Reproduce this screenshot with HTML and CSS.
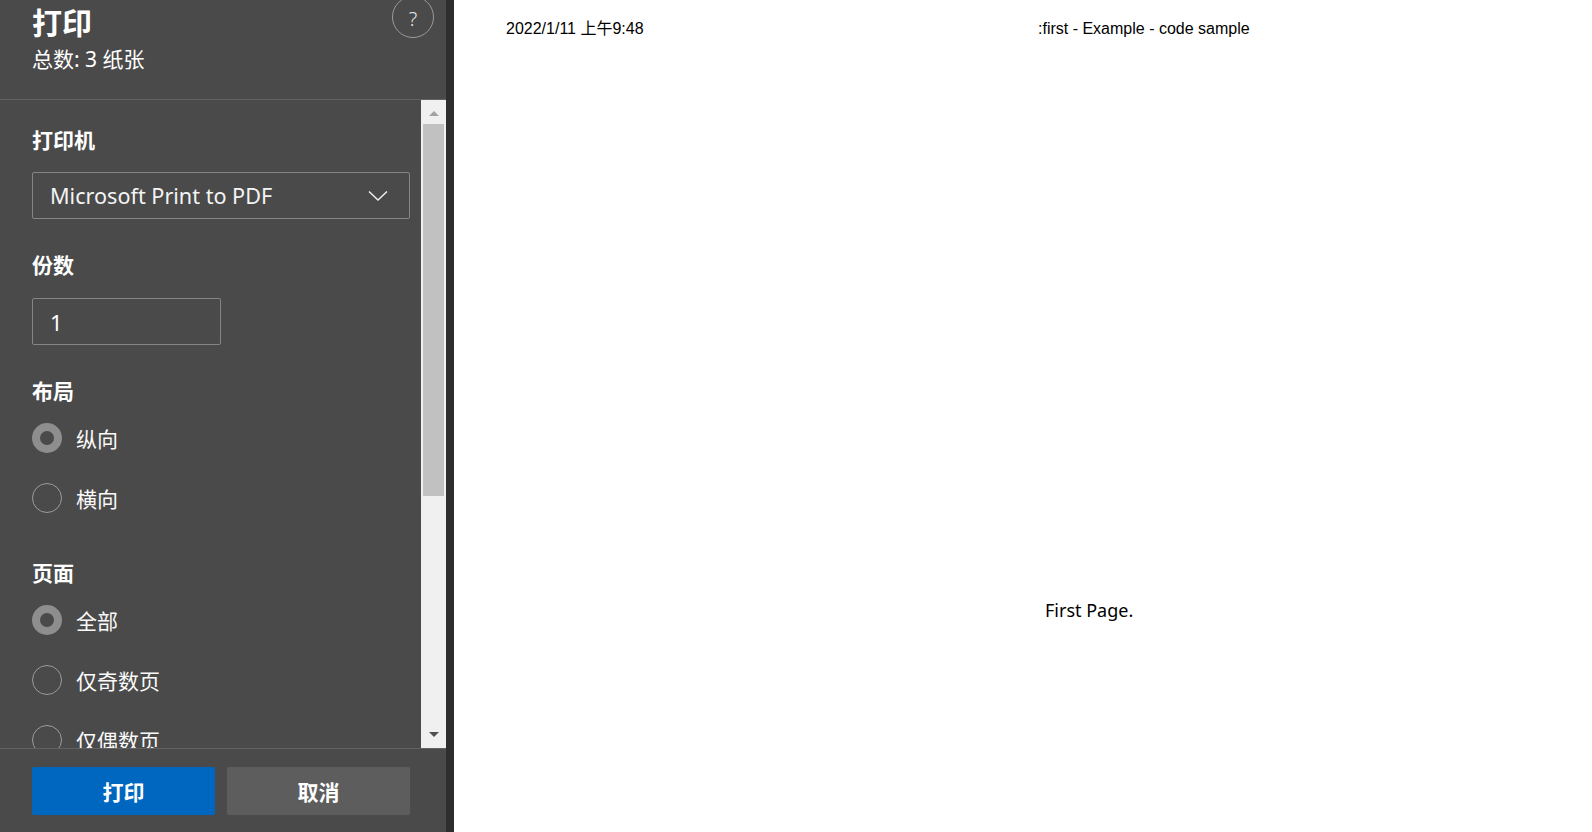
FILE: index.html
```html
<!DOCTYPE html>
<html lang="zh-CN">
<head>
<meta charset="utf-8">
<title>打印</title>
<link rel="stylesheet" href="styles.css">
</head>
<body>
<div class="app">
  <aside class="panel">
    <header class="panel-head">
      <h1 class="title">打印</h1>
      <div class="subtitle">总数: 3 纸张</div>
      <div class="help">?</div>
    </header>
    <div class="scroll-wrap">
      <div class="scroll-content">
        <div class="label">打印机</div>
        <div class="select">
          <span class="select-text">Microsoft Print to PDF</span>
          <svg class="chev" width="20" height="12" viewBox="0 0 20 12"><path d="M1 1.5 L10 10 L19 1.5" fill="none" stroke="#f2f2f2" stroke-width="1.4"/></svg>
        </div>
        <div class="label gap">份数</div>
        <div class="input">1</div>
        <div class="label gap">布局</div>
        <div class="radios">
          <div class="radio on"><span class="dot"></span><span class="rtext">纵向</span></div>
          <div class="radio"><span class="dot"></span><span class="rtext">横向</span></div>
        </div>
        <div class="label gap2">页面</div>
        <div class="radios">
          <div class="radio on"><span class="dot"></span><span class="rtext">全部</span></div>
          <div class="radio"><span class="dot"></span><span class="rtext">仅奇数页</span></div>
          <div class="radio"><span class="dot"></span><span class="rtext">仅偶数页</span></div>
        </div>
      </div>
      <div class="scrollbar">
        <div class="arrow up"></div>
        <div class="track"><div class="thumb"></div></div>
        <div class="arrow down"></div>
      </div>
    </div>
    <footer class="panel-foot">
      <button class="btn primary">打印</button>
      <button class="btn secondary">取消</button>
    </footer>
  </aside>
  <div class="divider"></div>
  <main class="preview">
    <div class="page-head">
      <span class="date">2022/1/11 上午9:48</span>
      <span class="doc-title">:first - Example - code sample</span>
    </div>
    <div class="page-body">First Page.</div>
  </main>
</div>
</body>
</html>
```
FILE: styles.css
```css
* { box-sizing: border-box; }
html, body { margin: 0; padding: 0; height: 100%; }
body {
  font-family: "Noto Sans", "Noto Sans CJK SC", sans-serif;
  overflow: hidden;
  background: #fff;
}
.app { display: flex; height: 832px; width: 1592px; }

.panel {
  width: 446px;
  flex: none;
  background: #4a4a4a;
  color: #fff;
  display: flex;
  flex-direction: column;
  position: relative;
}
.panel-head {
  height: 100px;
  flex: none;
  border-bottom: 1px solid #626262;
  padding: 0 0 0 32px;
  position: relative;
}
.title {
  margin: 0;
  font-family: "Noto Sans CJK SC", sans-serif;
  font-size: 30px;
  font-weight: 700;
  line-height: 42px;
}
.subtitle {
  font-family: "Noto Sans", "Noto Sans CJK SC", sans-serif;
  font-size: 21px;
  line-height: 28px;
  margin-top: 3px;
}
.help {
  position: absolute;
  top: -4px;
  right: 12px;
  width: 42px;
  height: 42px;
  border: 1px solid #9a9a9a;
  border-radius: 50%;
  display: flex;
  align-items: center;
  justify-content: center;
  font-family: "Noto Sans", sans-serif;
  font-size: 20px;
  font-weight: 300;
  color: #e6e6e6;
  padding-top: 2px;
}

.scroll-wrap {
  flex: 1;
  display: flex;
  overflow: hidden;
  min-height: 0;
}
.scroll-content {
  flex: 1;
  padding: 25px 0 0 32px;
  overflow: hidden;
}
.label {
  font-family: "Noto Sans CJK SC", sans-serif;
  font-size: 21px;
  font-weight: 700;
  line-height: 28px;
}
.label.gap { margin-top: 31px; }
.label.gap2 { margin-top: 45px; }
.select {
  margin-top: 19px;
  width: 378px;
  height: 47px;
  border: 1px solid #858585;
  border-radius: 2px;
  display: flex;
  align-items: center;
  justify-content: space-between;
  padding: 0 21px 0 17px;
}
.select-text {
  font-family: "Noto Sans", sans-serif;
  font-size: 21.6px;
  color: #f4f4f4;
}
.chev { display: block; }
.input {
  margin-top: 20px;
  width: 189px;
  height: 47px;
  border: 1px solid #858585;
  border-radius: 2px;
  display: flex;
  align-items: center;
  padding-left: 17px;
  font-family: "Noto Sans", sans-serif;
  font-size: 22px;
}
.radios {
  display: flex;
  flex-direction: column;
  gap: 30px;
  margin-top: 19px;
}
.radio {
  display: flex;
  align-items: center;
  height: 30px;
  gap: 14px;
}
.dot {
  width: 30px;
  height: 30px;
  border-radius: 50%;
  border: 1px solid #9c9c9c;
  flex: none;
}
.radio.on .dot {
  border: 8px solid #8e8e8e;
  background: #4a4a4a;
}
.rtext {
  font-family: "Noto Sans CJK SC", sans-serif;
  font-size: 21px;
  line-height: 28px;
  color: #fafafa;
}

.scrollbar {
  width: 25px;
  flex: none;
  background: #f0f0f0;
  display: flex;
  flex-direction: column;
  align-items: center;
}
.arrow {
  width: 0;
  height: 0;
  border-left: 5px solid transparent;
  border-right: 5px solid transparent;
  flex: none;
}
.arrow.up { border-bottom: 5px solid #a3a3a3; margin-top: 11px; }
.arrow.down { border-top: 5px solid #505050; margin-bottom: 11px; }
.track { flex: 1; width: 100%; padding: 8px 2px 0 2px; }
.thumb { width: 21px; height: 372px; background: #c1c1c1; }

.panel-foot {
  height: 84px;
  flex: none;
  border-top: 1px solid #626262;
  display: flex;
  gap: 12px;
  padding: 18px 0 0 32px;
}
.btn {
  width: 183px;
  height: 48px;
  border: none;
  border-radius: 2px;
  color: #fff;
  font-family: "Noto Sans CJK SC", sans-serif;
  font-size: 21px;
  font-weight: 700;
  padding: 0;
}
.btn.primary { background: #0067c0; }
.btn.secondary { background: #5d5d5d; }

.divider { width: 8px; flex: none; background: #2e2e2e; }

.preview {
  flex: 1;
  background: #fff;
  color: #000;
  position: relative;
}
.page-head {
  display: flex;
  padding: 19px 0 0 52px;
  font-family: "Liberation Sans", "Noto Sans CJK SC", sans-serif;
  font-size: 16px;
  line-height: 20px;
}
.date { width: 532px; flex: none; }
.page-body {
  margin-top: 558px;
  padding-left: 591px;
  font-family: "Noto Sans", sans-serif;
  font-size: 18px;
  line-height: 26px;
}
```
